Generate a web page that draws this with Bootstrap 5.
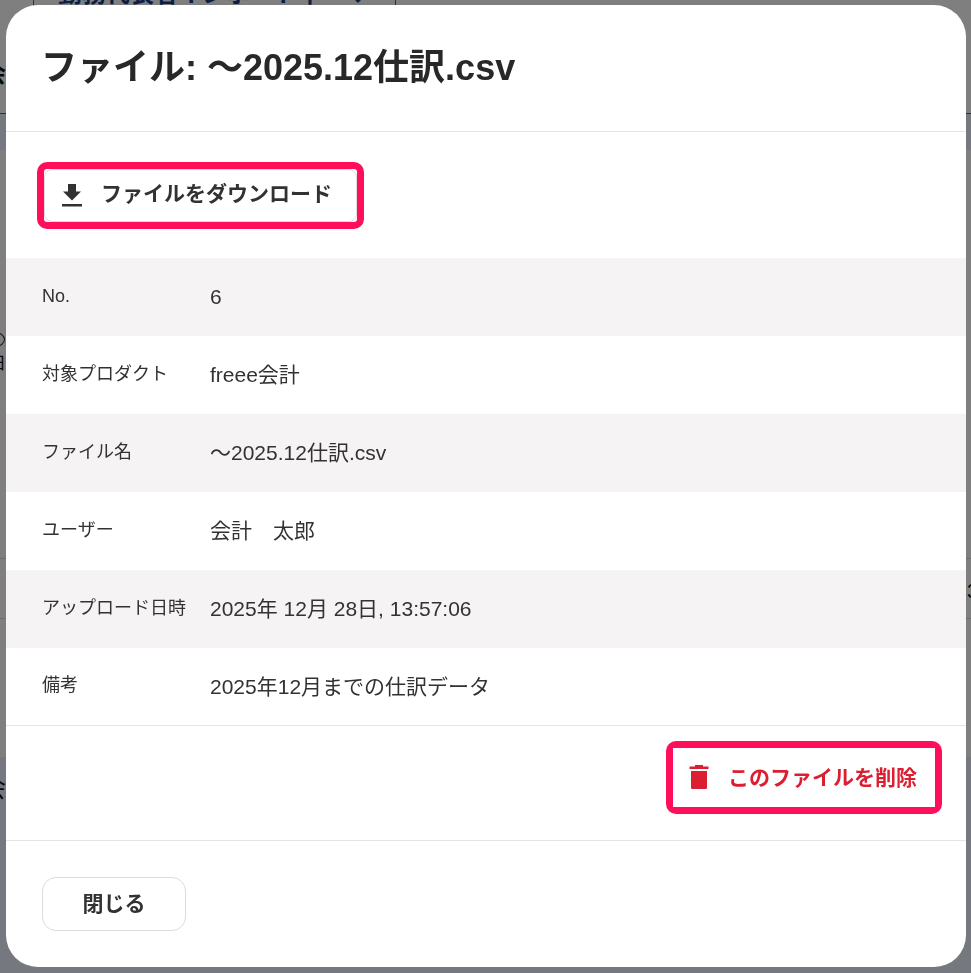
<!DOCTYPE html>
<html lang="ja">
<head>
<meta charset="utf-8">
<link href="https://cdn.jsdelivr.net/npm/bootstrap@5.3.0/dist/css/bootstrap.min.css" rel="stylesheet">
<style>
html,body{height:100%;}
body{background:#fff;font-family:"Liberation Sans","Noto Sans CJK JP",sans-serif;color:#323232;overflow:hidden;}
/* page behind the dialog */
.under{height:973px;overflow:hidden;color:#111;display:flow-root;}
.under-top{height:114px;border-bottom:1px solid #2864f0;display:flow-root;}
.pick-box{width:363px;height:60px;margin:-35px 0 0 33px;border:1px solid #2864f0;padding:0 0 0 24px;color:#143c8c;font-size:24px;font-weight:700;line-height:60px;gap:29px;}
.pick-caret{width:0;height:0;border-left:7px solid transparent;border-right:7px solid transparent;border-top:7px solid #143c8c;margin-bottom:21px;}
.clip-head{margin:35px 0 0 -17px;font-size:23px;line-height:28px;font-weight:700;}
.tint{background:#eaf0ff;display:flow-root;}
.tint-a{height:36px;}
.plain-a{height:408px;display:flow-root;}
.ring-mark{width:20px;height:15px;border:1px solid #222;border-radius:50%;margin:182px 0 0 -15px;}
.clip-cell{margin:5px 0 0 -11px;font-size:17px;line-height:24px;}
.rule-row{height:61px;border-top:1px solid #ddd;border-bottom:1px solid #ddd;}
.clip-num{font-size:20px;line-height:24px;margin:20px -7px 0 0;}
.plain-b{height:138px;}
.tint-b{height:216px;}
.clip-foot{margin:14px 0 0 -20px;font-size:26px;line-height:34px;}
.scrim{position:fixed;inset:0;background:#000;opacity:.5;}
/* dialog */
.stage{position:fixed;inset:0;padding:5px 5px 6px 6px;}
.sheet{background:#fff;border-radius:32px;height:962px;overflow:hidden;}
.sheet-head{height:127px;padding:41px 36px 0 35px;border-bottom:1px solid #e4e4e4;}
.sheet-title{font-size:36px;font-weight:700;line-height:44px;color:#282828;margin:0;}
.dl-zone{height:126px;padding:30px 0 0 31px;}
.hl-box{border:7px solid #ff0f5a;border-radius:10px;display:inline-flex;}
.ghost-btn{background:#fff;border:1px solid #dcdcdc;border-radius:8px;font-weight:700;font-size:21px;color:#323232;height:53px;width:313px;padding:0 0 0 17px;gap:19px;}
.ghost-label{padding-bottom:3px;}
.info-row{height:78px;padding-left:36px;}
.info-row:nth-child(odd){background:#f5f3f4;}
.info-row:last-child{height:77px;}
.info-key{width:168px;font-size:18px;color:#323232;padding-bottom:2px;}
.info-val{font-size:21px;color:#323232;}
.del-zone{height:116px;border-top:1px solid #e4e4e4;border-bottom:1px solid #e4e4e4;padding:15px 24px 0 0;}
.del-btn{background:#fff;border:0;font-weight:700;font-size:21px;color:#dc1e32;height:59px;width:262px;padding:0 0 0 16px;gap:19px;}
.foot-zone{padding:36px 0 0 36px;}
.close-btn{background:#fff;border:1px solid #dcdcdc;border-radius:14px;width:144px;height:54px;font-weight:700;font-size:21px;color:#323232;}
</style>
</head>
<body>
<div class="under">
  <div class="under-top">
    <div class="pick-box d-flex align-items-end"><span>勤務代表者インポート中</span><span class="pick-caret"></span></div>
    <div class="clip-head">会計</div>
  </div>
  <div class="tint tint-a"></div>
  <div class="plain-a">
    <div class="ring-mark"></div>
    <div class="clip-cell">日付</div>
  </div>
  <div class="rule-row d-flex justify-content-end"><div class="clip-num">3</div></div>
  <div class="plain-b"></div>
  <div class="tint tint-b"><div class="clip-foot">会計</div></div>
</div>
<div class="scrim"></div>
<div class="stage">
  <div class="sheet">
    <div class="sheet-head"><h1 class="sheet-title">ファイル: ～2025.12仕訳.csv</h1></div>
    <div class="dl-zone">
      <div class="hl-box">
        <button class="ghost-btn d-flex align-items-center" type="button">
          <svg width="20" height="24" viewBox="0 0 20 24"><path fill="#323232" d="M6 0h8v7.5h5L10 16.5 1 7.5h5zM0 20h20v2.5H0z"/></svg>
          <span class="ghost-label">ファイルをダウンロード</span>
        </button>
      </div>
    </div>
    <div>
      <div class="info-row d-flex align-items-center"><div class="info-key">No.</div><div class="info-val">6</div></div>
      <div class="info-row d-flex align-items-center"><div class="info-key">対象プロダクト</div><div class="info-val">freee会計</div></div>
      <div class="info-row d-flex align-items-center"><div class="info-key">ファイル名</div><div class="info-val">～2025.12仕訳.csv</div></div>
      <div class="info-row d-flex align-items-center"><div class="info-key">ユーザー</div><div class="info-val">会計　太郎</div></div>
      <div class="info-row d-flex align-items-center"><div class="info-key">アップロード日時</div><div class="info-val">2025年 12月 28日, 13:57:06</div></div>
      <div class="info-row d-flex align-items-center"><div class="info-key">備考</div><div class="info-val">2025年12月までの仕訳データ</div></div>
    </div>
    <div class="del-zone d-flex justify-content-end align-items-start">
      <div class="hl-box">
        <button class="del-btn d-flex align-items-center" type="button">
          <svg width="20" height="26" viewBox="0 0 20 26"><path fill="#dc1e32" d="M6 0h8v1.5h5.5V4H.5V1.5H6zM2 6h16v17a1 1 0 0 1-1 1H3a1 1 0 0 1-1-1z"/></svg>
          <span>このファイルを削除</span>
        </button>
      </div>
    </div>
    <div class="foot-zone"><button class="close-btn" type="button">閉じる</button></div>
  </div>
</div>
<script src="https://cdn.jsdelivr.net/npm/bootstrap@5.3.0/dist/js/bootstrap.bundle.min.js"></script>
</body>
</html>
